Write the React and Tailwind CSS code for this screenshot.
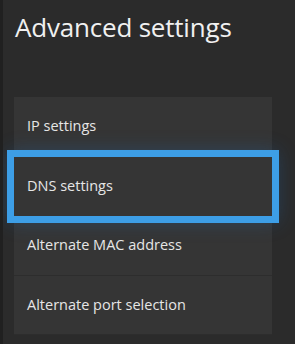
import React from "react";

const items = [
  { label: "IP settings" },
  { label: "DNS settings", focused: true },
  { label: "Alternate MAC address" },
  { label: "Alternate port selection" },
];

function Row({ label, focused }) {
  return (
    <div
      className={
        "relative flex h-[59.5px] items-center bg-[#353535] pl-[13px] text-[14.5px] text-[#e6e6e6] " +
        (focused
          ? "z-10 outline-[7px] outline-solid outline-[#3d9ee6] shadow-[0_0_18px_6px_rgba(30,110,190,0.3)]"
          : "border-b border-[#2d2d2d]")
      }
    >
      {label}
    </div>
  );
}

export default function App() {
  return (
    <div
      className="h-[344px] w-[295px] overflow-hidden bg-[#2b2b2b] border-l-[3px] border-[#202020]"
      style={{ fontFamily: '"Open Sans", "Noto Sans", sans-serif' }}
    >
      <h1 className="pl-[12px] pt-[9px] text-[26px] leading-[36px] text-[#f0f0f0] tracking-[-0.2px]">
        Advanced settings
      </h1>
      <div className="ml-[11px] mr-[23px] mt-[52px] flex flex-col">
        {items.map((it) => (
          <Row key={it.label} label={it.label} focused={it.focused} />
        ))}
      </div>
    </div>
  );
}
